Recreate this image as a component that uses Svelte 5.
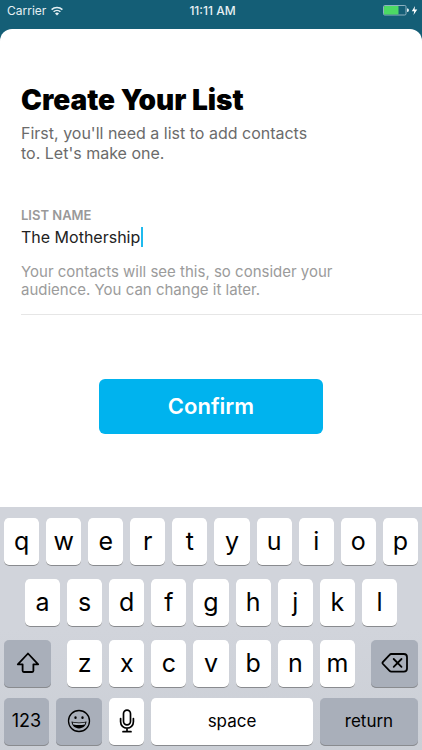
<script lang="ts">
	const topRow = 'qwertyuiop'.split('');
	const homeRow = 'asdfghjkl'.split('');
	const bottomRow = 'zxcvbnm'.split('');

	let listName = $state('The Mothership');
	let shifted = $state(false);

	function type(char: string) {
		listName += shifted ? char.toUpperCase() : char;
		shifted = false;
	}
</script>

{#snippet letter(char: string)}
	<button type="button" class="key" onclick={() => type(char)}>{char}</button>
{/snippet}

<div class="screen">
	<header class="status">
		<div class="carrier">
			<span>Carrier</span>
			<svg width="12" height="10" viewBox="0 0 12 10" aria-hidden="true">
				<g fill="none" stroke="currentColor" stroke-width="1.5">
					<path d="M.6 3.6a7.7 7.7 0 0 1 10.8 0" />
					<path d="M2.6 5.8a4.9 4.9 0 0 1 6.8 0" />
				</g>
				<path d="M6 9.4 4 7.4a2.9 2.9 0 0 1 4 0z" fill="currentColor" />
			</svg>
		</div>
		<time>11:11 AM</time>
		<div class="power">
			<svg width="35" height="11" viewBox="0 0 35 11" role="img" aria-label="Battery charging">
				<rect x=".5" y=".5" width="22.5" height="9.5" rx="1.2" fill="none" stroke="#8db1c0" />
				<rect x="1" y="1" width="14.5" height="8.5" rx=".6" fill="#4cd964" />
				<path d="M24 3.6c1.5 0 1.9.7 1.9 1.7S25.5 7 24 7z" fill="#e6f0f3" />
				<path d="M32 1 28.8 6.2h2.4L30.5 10l3.8-5.5h-2.7z" fill="#fff" />
			</svg>
		</div>
	</header>

	<main class="sheet">
		<h1>Create Your List</h1>
		<p class="intro">First, you'll need a list to add contacts to. Let's make one.</p>

		<div class="field">
			<label for="list-name">List Name</label>
			<div class="entry">
				<input id="list-name" type="text" autocomplete="off" bind:value={listName} />
				<span class="caret"></span>
			</div>
			<p class="hint">Your contacts will see this, so consider your audience. You can change it later.</p>
		</div>

		<button type="button" class="confirm">Confirm</button>
	</main>

	<div class="keyboard">
		<div class="row">
			{#each topRow as char (char)}
				{@render letter(char)}
			{/each}
		</div>
		<div class="row home">
			{#each homeRow as char (char)}
				{@render letter(char)}
			{/each}
		</div>
		<div class="row lower">
			<button
				type="button"
				class="key dark side"
				aria-label="Shift"
				aria-pressed={shifted}
				onclick={() => (shifted = !shifted)}
			>
				<svg width="24" height="22" viewBox="0 0 24 22" aria-hidden="true">
					<path
						d="M12 1.5 1.8 12.3H6.6v6.500q0 1.200 1.200 1.200h8.400q1.200 0 1.200-1.200v-6.500h4.800z"
						fill="none"
						stroke="currentColor"
						stroke-width="1.8"
						stroke-linejoin="round"
					/>
				</svg>
			</button>
			<div class="letters">
				{#each bottomRow as char (char)}
					{@render letter(char)}
				{/each}
			</div>
			<button
				type="button"
				class="key dark side"
				aria-label="Delete"
				onclick={() => (listName = listName.slice(0, -1))}
			>
				<svg width="28" height="22" viewBox="0 0 28 22" aria-hidden="true">
					<g
						fill="none"
						stroke="currentColor"
						stroke-width="1.8"
						stroke-linecap="round"
						stroke-linejoin="round"
					>
						<path d="M10.3 2h12.500q3.200 0 3.200 3.200v11.300q0 3.200-3.200 3.200H10.300q-1 0-1.700-.8L2 12q-1-1.100 0-2.200l6.600-7q.7-.8 1.700-.8z" />
						<path d="m12.7 7 7.800 7.800M20.500 7l-7.800 7.800" />
					</g>
				</svg>
			</button>
		</div>
		<div class="row functions">
			<button type="button" class="key dark word numbers">123</button>
			<button type="button" class="key dark emoji" aria-label="Emoji">
				<svg width="24" height="24" viewBox="0 0 24 24" aria-hidden="true">
					<circle cx="12" cy="12" r="10.5" fill="none" stroke="currentColor" stroke-width="1.3" />
					<ellipse cx="8.5" cy="8.7" rx="1.2" ry="1.4" fill="currentColor" />
					<ellipse cx="15.5" cy="8.700" rx="1.2" ry="1.4" fill="currentColor" />
					<path d="M4.5 12.600q7.500 1.800 15 0c-.3 4.100-3.300 6.800-7.500 6.800s-7.200-2.700-7.500-6.800z" fill="currentColor" />
					<path d="M5.600 13.600q6.400 1.200 12.800 0l-.6 1.800q-5.800 1.100-11.600 0z" fill="#b3b9c3" />
				</svg>
			</button>
			<button type="button" class="key mic" aria-label="Dictate">
				<svg width="16" height="24" viewBox="0 0 16 24" aria-hidden="true">
					<g fill="none" stroke="currentColor" stroke-width="1.7" stroke-linecap="round">
						<rect x="4.5" y="1.2" width="7" height="14.6" rx="3.5" />
						<path d="M1.6 9.500v3.300a6.400 6.400 0 0 0 12.800 0V9.500M8 19.200v3.300M4 22.700h8" />
					</g>
				</svg>
			</button>
			<button type="button" class="key word space" onclick={() => type(' ')}>space</button>
			<button type="button" class="key dark word return">return</button>
		</div>
	</div>
</div>

<style>
	:global(body) {
		margin: 0;
		background: #145e76;
	}
	.screen {
		display: flex;
		flex-direction: column;
		min-height: 100vh;
		font-family: Inter, 'Liberation Sans', sans-serif;
		background: #145e76;
	}
	button,
	input {
		margin: 0;
		padding: 0;
		border: 0;
		font-family: inherit;
	}
	svg {
		display: block;
	}

	.status {
		display: grid;
		grid-template-columns: 1fr auto 1fr;
		align-items: center;
		height: 21px;
		padding: 0 4px 8px 7px;
		color: #e6f0f3;
		font-size: 12px;
	}
	.carrier {
		display: flex;
		align-items: center;
		gap: 5px;
	}
	time {
		font-size: 12px;
		font-weight: 500;
	}
	.power {
		justify-self: end;
	}

	.sheet {
		display: flex;
		flex-direction: column;
		flex: 1;
		padding: 54px 0 40px 21px;
		border-radius: 12px 12px 0 0;
		background: #fff;
	}
	h1 {
		margin: 0;
		color: #000;
		font-size: 28px;
		font-weight: 900;
		line-height: 34px;
	}
	p {
		margin: 0;
		max-width: 320px;
	}
	.intro {
		max-width: 300px;
		margin-top: 6px;
		color: #6b6b6b;
		font-size: 16px;
		line-height: 20px;
	}
	.field {
		margin-top: 44px;
		padding-bottom: 15px;
		border-bottom: 1px solid #e6e6e6;
	}
	label {
		display: block;
		color: #999;
		font-size: 13px;
		font-weight: 600;
		line-height: 16px;
		text-transform: uppercase;
	}
	.entry {
		display: flex;
		align-items: center;
		gap: 1px;
		height: 28px;
	}
	input {
		field-sizing: content;
		height: 24px;
		outline: 0;
		background: none;
		color: #222;
		caret-color: transparent;
		font-size: 16px;
	}
	.caret {
		width: 2px;
		height: 20px;
		background: #1fbaee;
	}
	.hint {
		margin-top: 12px;
		color: #9b9b9b;
		font-size: 15px;
		line-height: 18px;
	}
	.confirm {
		align-self: center;
		width: 56%;
		height: 55px;
		margin: 64px 21px 0 0;
		padding-bottom: 1px;
		border-radius: 6px;
		background: #00b3ee;
		color: #fff;
		font-size: 22px;
		font-weight: 600;
	}

	.keyboard {
		display: flex;
		flex-direction: column;
		gap: 13px;
		padding: 11px 4px 4px;
		background: linear-gradient(#d1d4db 50%, #cbcfd6);
	}
	.row,
	.letters {
		display: flex;
		gap: 7px;
	}
	.home {
		padding: 0 21px;
	}
	.lower {
		gap: 16px;
	}
	.letters {
		flex: 288;
	}
	.functions {
		margin-top: -3px;
	}
	.key {
		display: flex;
		flex: 1;
		align-items: center;
		justify-content: center;
		min-width: 0;
		height: 48px;
		padding-bottom: 3px;
		border-radius: 5px;
		background: #fff;
		box-shadow: inset 0 -1px #898b8f;
		color: #000;
		font-size: 25px;
	}
	.dark {
		background: #a9afba;
	}
	.side {
		flex: 47;
	}
	.word {
		font-size: 17px;
	}
	.numbers {
		flex: 45;
		font-size: 18px;
	}
	.emoji {
		flex: 46;
	}
	.mic {
		flex: 35;
	}
	.space {
		flex: 162;
	}
	.return {
		flex: 98;
	}
</style>
